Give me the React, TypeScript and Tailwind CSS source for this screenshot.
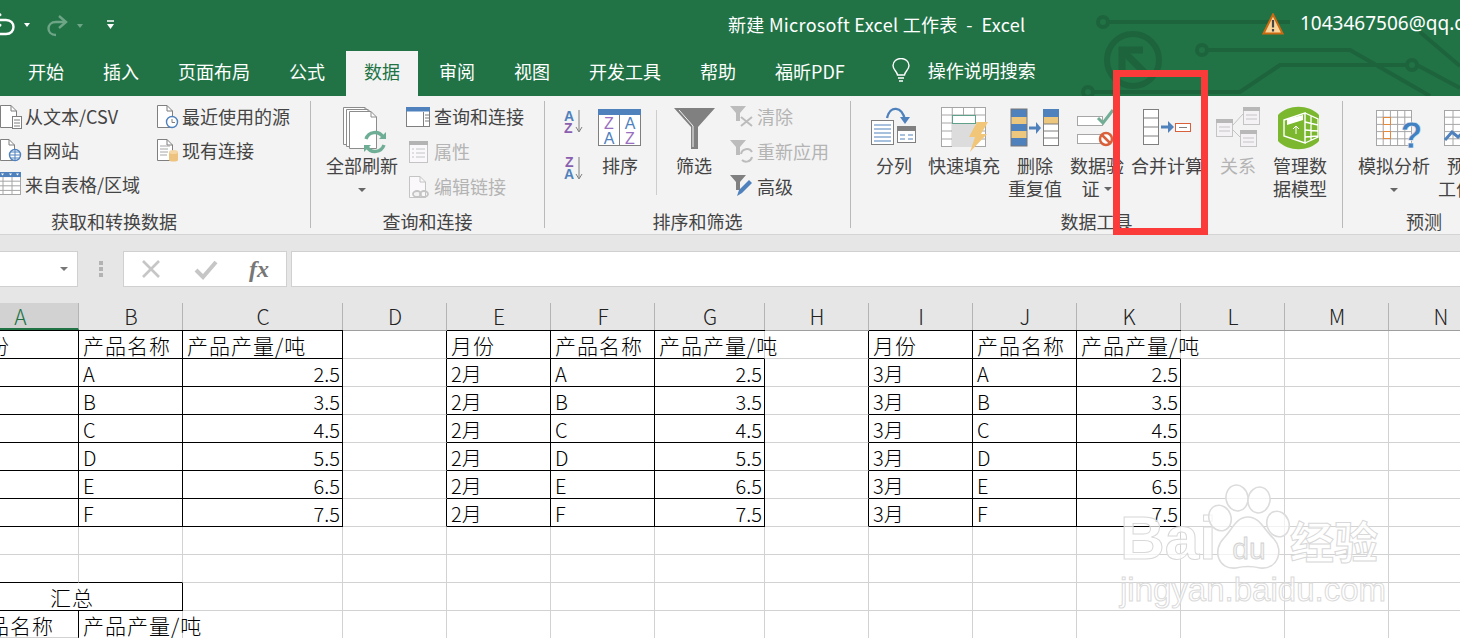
import React from "react";

const BLUE = "#4f81bd";
const GR = "#7f7f7f";
const DIS = "#c4c4c4";

function Page({ x, y, w, h, s = GR, fill = "#fff", fold = 6 }: { x: number; y: number; w: number; h: number; s?: string; fill?: string; fold?: number }) {
  return (
    <g fill={fill} stroke={s} strokeWidth="1">
      <path d={`M${x + 0.5} ${y + 0.5}H${x + w - fold}L${x + w - 0.5} ${y + fold}V${y + h - 0.5}H${x + 0.5}Z`} />
      <path d={`M${x + w - fold} ${y + 0.5}V${y + fold}H${x + w - 0.5}`} fill="none" />
    </g>
  );
}

function Grid({ x, y, w, h, cols, rows, s = GR, fill = "#fff" }: { x: number; y: number; w: number; h: number; cols: number; rows: number; s?: string; fill?: string }) {
  const v = Array.from({ length: cols - 1 }, (_, i) => x + ((i + 1) * w) / cols);
  const hz = Array.from({ length: rows - 1 }, (_, i) => y + ((i + 1) * h) / rows);
  return (
    <g stroke={s} strokeWidth="1">
      <rect x={x + 0.5} y={y + 0.5} width={w - 1} height={h - 1} fill={fill} />
      {v.map((p) => <path key={p} d={`M${p} ${y}V${y + h}`} />)}
      {hz.map((p) => <path key={p} d={`M${x} ${p}H${x + w}`} />)}
    </g>
  );
}

function Caret({ c = "#666" }: { c?: string }) {
  return (
    <svg width="10" height="6" viewBox="0 0 10 6" className="inline-block">
      <path d="M1 1H9L5 5Z" fill={c} />
    </svg>
  );
}

function Big({ left, w, lines, caret, disabled, children }: { left: number; w: number; lines: string[]; caret?: boolean; disabled?: boolean; children?: React.ReactNode }) {
  return (
    <div className="flex flex-col items-center shrink-0" style={{ width: w }}>
      <svg width={w} height="51" viewBox={`${left} 104 ${w} 51`} className="mt-[8px] overflow-visible shrink-0">{children}</svg>
      {lines.map((l, i) => (
        <div key={i} className={`h-[23px] pb-[2px] whitespace-nowrap flex items-center gap-[3px] ${disabled ? "text-[#b4b4b4]" : "text-[#444]"}`}>
          {l}
          {caret && lines.length > 1 && i === lines.length - 1 ? <Caret /> : null}
        </div>
      ))}
      {caret && lines.length === 1 ? <div className="h-[23px] flex items-center"><Caret /></div> : null}
    </div>
  );
}

function Small({ left, top, h, w, text, disabled, children }: { left: number; top: number; h: number; w: number; text: string; disabled?: boolean; children?: React.ReactNode }) {
  return (
    <div className="flex items-center" style={{ height: h }}>
      <svg width={w} height={h} viewBox={`${left} ${top} ${w} ${h}`} className="overflow-visible shrink-0">{children}</svg>
      <span className={`whitespace-nowrap pb-[2px] ${disabled ? "text-[#b4b4b4]" : "text-[#444]"}`}>{text}</span>
    </div>
  );
}

function Group({ w, label, className, children }: { w: number; label: string; className?: string; children: React.ReactNode }) {
  return (
    <div className={`flex flex-col shrink-0 ${className ?? ""}`} style={{ width: w }}>
      <div className="h-[116px] flex">{children}</div>
      <div className="h-[20px] leading-[18px] text-center text-[#444] whitespace-nowrap">{label}</div>
    </div>
  );
}

function Divider() {
  return <div className="w-px h-[127px] mt-[5px] bg-[#b9b9b9] shrink-0" />;
}

const TABS = ["开始", "插入", "页面布局", "公式", "数据", "审阅", "视图", "开发工具", "帮助", "福昕PDF"];
const HEADS = ["A", "B", "C", "D", "E", "F", "G", "H", "I", "J", "K", "L", "M", "N"];
const ITEMS = ["A", "B", "C", "D", "E", "F"];
const VALS = ["2.5", "3.5", "4.5", "5.5", "6.5", "7.5"];

function cellText(r: number, c: number): string {
  const table = (m: string, off: number) => {
    if (c === off) return r === 0 ? "月份" : m;
    if (c === off + 1) return r === 0 ? "产品名称" : ITEMS[r - 1];
    if (c === off + 2) return r === 0 ? "产品产量/吨" : VALS[r - 1];
    return "";
  };
  if (r > 6) return "";
  if (c <= 2) return table("1月", 0);
  if (c >= 4 && c <= 6) return table("2月", 4);
  if (c >= 8 && c <= 10) return table("3月", 8);
  return "";
}

function Cell({ r, c }: { r: number; c: number }) {
  const inTable = r <= 6 && [0, 1, 2, 4, 5, 6, 8, 9, 10].includes(c);
  let right = r <= 6 && [0, 1, 2, 3, 4, 5, 7, 8, 9].includes(c);
  if (r >= 1 && r <= 6 && (c === 6 || c === 10)) right = true;
  let bottom = inTable;
  if (r === 8 && c <= 1) bottom = true;
  if (r === 10 && c === 0) right = true;
  let text = cellText(r, c);
  if (r === 10 && c === 0) text = "产品名称";
  if (r === 10 && c === 1) text = "产品产量/吨";
  const isNum = r >= 1 && r <= 6 && (c === 2 || c === 6 || c === 10);
  const isCjk = /[\u4e00-\u9fff]/.test(text) && (text.length > 2 || text === "月份");
  return (
    <div
      className={`h-[28px] border-r border-b leading-[29px] text-black whitespace-nowrap font-light ${right ? "border-r-black" : "border-r-[#d2d2d2]"} ${bottom ? "border-b-black" : "border-b-[#d2d2d2]"} ${isNum ? "text-right pr-[2px]" : "pl-[4px]"} ${r === 0 && inTable ? "shadow-[0_-1px_0_#000]" : ""} ${r === 10 && c === 0 ? "border-b-[#217346] border-b-2" : ""} ${isCjk ? "text-[21px] tracking-[1px]" : "text-[20px]"}`}
    >
      {text}
    </div>
  );
}

export default function App() {
  const rows = Array.from({ length: 11 }, (_, i) => i);
  const gridCols = "grid grid-cols-[117px_104px_160px_104px_104px_104px_110px_104px_104px_104px_104px_104px_104px_104px] w-[1537px] -ml-[38px]";
  return (
    <div className="relative w-[1460px] h-[638px] overflow-hidden bg-white text-[18px] font-['Noto_Sans_CJK_SC',sans-serif]">
      {/* Title + tabs */}
      <div className="relative h-[96px] bg-[#217346] text-white">
        <svg className="absolute left-0 top-0" width="1460" height="96" viewBox="0 0 1460 96" fill="none" stroke="#1d643d" strokeWidth="4">
          <circle cx="1103" cy="22" r="5" />
          <path d="M1108 22H1290" />
          <circle cx="1133" cy="60" r="26" strokeWidth="6" />
          <path d="M1125 53L1147 75" strokeWidth="7" />
          <path d="M1143 50H1122V71" strokeWidth="7" />
          <circle cx="1202" cy="50" r="5" />
          <path d="M1207 50H1350L1430 96" />
          <circle cx="1412" cy="65" r="5" />
          <path d="M1093 92H1240L1280 65H1407M1417 65L1460 88M1420 32L1460 66" />
          <circle cx="1088" cy="92" r="5" />
        </svg>
        <div className="relative h-[50px] flex items-center pb-[3px]">
          <div className="w-[728px] h-[47px] shrink-0 flex items-center">
            <svg width="130" height="48" viewBox="0 0 130 48" fill="none">
              <path d="M-3 20H6C16 20 16 34 6 34H-1" stroke="#fff" strokeWidth="2.4" />
              <path d="M1 14L-6 20L1 26" stroke="#fff" strokeWidth="2.4" />
              <path d="M24 23H30L27 27Z" fill="#fff" />
              <path d="M65 22H56C46 22 46 35 56 35" stroke="#6ea586" strokeWidth="2.4" />
              <path d="M59 16L66 22L59 28" stroke="#6ea586" strokeWidth="2.4" />
              <path d="M77 24H83L80 28Z" fill="#6ea586" />
              <path d="M107 21H114" stroke="#fff" strokeWidth="1.5" />
              <path d="M107 24H114L110.5 29Z" fill="#fff" />
            </svg>
          </div>
          <div className="w-[534px] shrink-0 whitespace-nowrap leading-[24px] tracking-[0.3px]">新建 Microsoft Excel 工作表&nbsp;&nbsp;-&nbsp;&nbsp;Excel</div>
          <div className="w-[38px] shrink-0">
            <svg width="22" height="22" viewBox="0 0 22 22">
              <path d="M11 1.5L20.5 20.5H1.5Z" fill="#f9d59a" stroke="#cc6a12" strokeWidth="2" />
              <path d="M11 7V14.5" stroke="#444" strokeWidth="2.2" />
              <path d="M11 16V18.5" stroke="#444" strokeWidth="2.2" />
            </svg>
          </div>
          <div className="whitespace-nowrap text-[19px] font-['Noto_Sans',sans-serif]">1043467506@qq.com</div>
        </div>
        <div className="relative h-[46px] flex pl-[10px] gap-[3px]">
          {TABS.map((t) => (
            <div key={t} className={`mt-[1px] px-[18px] leading-[41px] whitespace-nowrap ${t === "数据" ? "bg-[#f3f3f3] text-[#217346]" : ""}`}>{t}</div>
          ))}
          <div className="ml-[25px] flex items-center gap-[17px] mb-[6px]">
            <svg width="20" height="24" viewBox="0 0 20 24" fill="none" stroke="#fff" strokeWidth="1.4">
              <path d="M6.5 17C6 13 2 12 2 7.5A8 7 0 0 1 18 7.5C18 12 14 13 13.5 17Z" />
              <path d="M7 20H13M8 23H12" />
            </svg>
            <span className="whitespace-nowrap">操作说明搜索</span>
          </div>
        </div>
      </div>

      {/* Ribbon */}
      <div className="h-[139px] bg-[#f3f3f3] border-b border-[#d4d4d4] flex">
        <Group w={392} label="获取和转换数据" className="-ml-[82px]">
          <div className="ml-[79px] w-[160px] pt-[4px] shrink-0">
            <Small left={-3} top={100} h={34} w={28} text="从文本/CSV">
              <Page x={0} y={105} w={17} h={23} />
              <rect x="12.5" y="116.5" width="9" height="12" fill="#fff" stroke={GR} />
              <path d="M14 120H20M14 123H20M14 126H20" stroke={GR} />
            </Small>
            <Small left={-3} top={134} h={34} w={28} text="自网站">
              <Page x={0} y={139} w={15} h={22} />
              <circle cx="15" cy="155" r="5.5" fill="#fff" stroke={BLUE} strokeWidth="1.4" />
              <path d="M9.5 155H20.5M15 149.5V160.5M10.5 152H19.5M10.5 158H19.5" stroke={BLUE} strokeWidth="1" />
            </Small>
            <Small left={-3} top={168} h={34} w={28} text="来自表格/区域">
              <Grid x={-6} y={172} w={27} h={23} cols={3} rows={5} s="#a6a6a6" />
              <rect x="-6" y="172" width="27" height="5" fill={BLUE} />
              <path d="M1 173.5H4L2.5 175.5ZM9 173.5H12L10.5 175.5ZM16 173.5H19L17.5 175.5Z" fill="#fff" />
            </Small>
          </div>
          <div className="pt-[4px] shrink-0">
            <Small left={157} top={100} h={34} w={25} text="最近使用的源">
              <Page x={157} y={105} w={16} h={23} />
              <circle cx="172" cy="122" r="5.5" fill="#fff" stroke={BLUE} strokeWidth="1.4" />
              <path d="M172 119V122.5H175" stroke={GR} fill="none" />
            </Small>
            <Small left={157} top={134} h={34} w={25} text="现有连接">
              <Page x={157} y={139} w={16} h={22} />
              <path d="M160 146H170M160 149H168M160 152H168M160 155H167" stroke="#a6a6a6" />
              <path d="M169 152V160C169 162 178 162 178 160V152Z" fill="#eec37f" />
              <ellipse cx="173.5" cy="152" rx="4.5" ry="2" fill="#f5d6a5" />
            </Small>
          </div>
        </Group>
        <Divider />
        <Group w={233} label="查询和连接">
          <div className="ml-[9px]">
            <Big left={320} w={84} lines={["全部刷新"]} caret>
              <Page x={343} y={107} w={28} h={38} s="#8c8c8c" />
              <Page x={346} y={109} w={28} h={38} s="#8c8c8c" />
              <Page x={349} y={111} w={28} h={38} s="#8c8c8c" />
              <g fill="none" stroke="#6fae96" strokeWidth="3.4">
                <path d="M366 139A9.5 9.5 0 0 1 383 137" />
                <path d="M384 145A9.5 9.5 0 0 1 367 147" />
              </g>
              <path d="M379 139H386V132Z" fill="#6fae96" />
              <path d="M371 145H364V152Z" fill="#6fae96" />
            </Big>
          </div>
          <div className="ml-[2px] pt-[4px] shrink-0">
            <Small left={406} top={100} h={35} w={28} text="查询和连接">
              <rect x="406.5" y="107.5" width="23" height="19" fill="#fff" stroke={GR} />
              <rect x="406" y="107" width="24" height="4.5" fill={BLUE} />
              <path d="M423.5 112V127M425 115H429M425 118H429M425 121H429" stroke={GR} />
            </Small>
            <Small left={406} top={135} h={35} w={28} text="属性" disabled>
              <rect x="409.5" y="141.5" width="18" height="21" fill="#faf8fb" stroke={DIS} />
              <rect x="409" y="141" width="19" height="4" fill="#b3b3b3" />
              <path d="M412 149H414M416 149H425M412 153H414M416 153H425M412 157H414M416 157H425" stroke={DIS} />
            </Small>
            <Small left={406} top={170} h={35} w={28} text="编辑链接" disabled>
              <Page x={409} y={176} w={17} h={22} s={DIS} fill="#faf8fb" />
              <g fill="none" stroke={DIS} strokeWidth="1.8">
                <ellipse cx="417" cy="194" rx="4" ry="3" fill="#f3f3f3" />
                <ellipse cx="424" cy="194" rx="4" ry="3" />
              </g>
            </Small>
          </div>
        </Group>
        <Divider />
        <Group w={305} label="排序和筛选">
          <div className="ml-[19px] w-[20px] relative shrink-0">
            <svg width="20" height="100" viewBox="564 104 20 100">
              <text x="564" y="129" fontSize="14" fontWeight="700" fill={BLUE} fontFamily="'Liberation Sans',sans-serif">A</text>
              <text x="564" y="141" fontSize="14" fontWeight="700" fill="#8a5fb0" fontFamily="'Liberation Sans',sans-serif">Z</text>
              <path d="M579 118V139M576 135L579 140L582 135" stroke={GR} fill="none" />
              <text x="565" y="175" fontSize="14" fontWeight="700" fill="#8a5fb0" fontFamily="'Liberation Sans',sans-serif">Z</text>
              <text x="564" y="187" fontSize="14" fontWeight="700" fill={BLUE} fontFamily="'Liberation Sans',sans-serif">A</text>
              <path d="M579 165V186M576 182L579 187L582 182" stroke={GR} fill="none" />
            </svg>
          </div>
          <Big left={584} w={72} lines={["排序"]}>
            <rect x="598.5" y="109.5" width="42" height="36" fill="#fff" stroke={GR} />
            <rect x="598" y="109" width="43" height="6" fill={BLUE} />
            <path d="M619.5 115V146" stroke={GR} />
            <g fontSize="16" fontFamily="'Liberation Sans',sans-serif" textAnchor="middle">
              <text x="609" y="129" fill="#9a6fc0">Z</text>
              <text x="609" y="144" fill={BLUE}>A</text>
              <text x="630" y="129" fill={BLUE}>A</text>
              <text x="630" y="144" fill="#9a6fc0">Z</text>
            </g>
          </Big>
          <div className="w-px h-[85px] mt-[14px] bg-[#cdcdcd] shrink-0" />
          <div className="ml-[2px]">
            <Big left={660} w={70} lines={["筛选"]}>
              <path d="M675 108H716L699 127V149H692V127Z" fill="#808080" />
              <path d="M680 110L694 126V147" stroke="#f3f3f3" fill="none" strokeWidth="1" />
            </Big>
          </div>
          <div className="ml-[1px] pt-[4px] shrink-0">
            <Small left={731} top={101} h={35} w={27} text="清除" disabled>
              <path d="M731 107H747L741 114V122H737V114Z" fill="#bcbcbc" />
              <path d="M742 118L753 127M753 118L742 127" stroke="#bcbcbc" strokeWidth="2" />
            </Small>
            <Small left={731} top={136} h={35} w={27} text="重新应用" disabled>
              <path d="M731 141H747L741 148V156H737V148Z" fill="#bcbcbc" />
              <path d="M742 155A6 6 0 0 1 753 153M753 158A6 6 0 0 1 743 161" stroke="#bcbcbc" strokeWidth="2" fill="none" />
            </Small>
            <Small left={731} top={171} h={35} w={27} text="高级">
              <path d="M731 176H747L741 183V191H737V183Z" fill="#808080" />
              <path d="M738 197L740 191L750 181L753 184L743 194Z" fill={BLUE} />
            </Small>
          </div>
        </Group>
        <Divider />
        <Group w={491} label="数据工具">
          <div className="ml-[9px] shrink-0">
            <Big left={860} w={68} lines={["分列"]}>
              <rect x="871.5" y="120.5" width="22" height="24" fill="#fff" stroke={GR} />
              <path d="M874 125H891M874 129H891M874 133H891M874 137H891M874 141H891" stroke={BLUE} />
              <rect x="897.5" y="126.5" width="18" height="16" fill="#fff" stroke={GR} />
              <rect x="897" y="126" width="19" height="5" fill="#808080" />
              <path d="M900 135H905M908 135H913M900 139H905M908 139H913" stroke={BLUE} />
              <path d="M887 118C890 105 902 106 905 120" stroke={BLUE} strokeWidth="2.4" fill="none" />
              <path d="M900 117H910L905 124Z" fill={BLUE} />
            </Big>
          </div>
          <Big left={928} w={72} lines={["快速填充"]}>
            <Grid x={941} y={107} w={45} h={40} cols={4} rows={5} s="#a6a6a6" />
            <rect x="952" y="124" width="23" height="23" fill="#dcdcdc" />
            <rect x="952.5" y="115.5" width="23" height="8" fill="#fff" stroke="#5fa28a" />
            <path d="M977 122H988L981 134H987L970 152L975 137H969Z" fill="#f2c679" />
          </Big>
          <Big left={1000} w={70} lines={["删除", "重复值"]}>
            <rect x="1011" y="109" width="16" height="37" fill={BLUE} stroke="#777" />
            <rect x="1011.5" y="117" width="15" height="7" fill="#eec77f" />
            <rect x="1011.5" y="131" width="15" height="7" fill="#eec77f" />
            <rect x="1043.5" y="109.5" width="15" height="36" fill="#fff" stroke={GR} />
            <rect x="1043" y="109" width="16" height="8" fill={BLUE} />
            <rect x="1044" y="117" width="14" height="7" fill="#eec77f" />
            <path d="M1044 131H1058M1044 138H1058M1044 124H1058" stroke={GR} />
            <path d="M1029 128H1037" stroke={BLUE} strokeWidth="3" />
            <path d="M1036 122L1041 128L1036 134Z" fill={BLUE} />
          </Big>
          <Big left={1070} w={54} lines={["数据验", "证"]} caret>
            <rect x="1077.5" y="116.5" width="25" height="9" fill="#fff" stroke="#a6a6a6" />
            <rect x="1077.5" y="134.5" width="25" height="9" fill="#fff" stroke="#a6a6a6" />
            <path d="M1098 118L1103 123L1113 110" stroke="#72ad96" strokeWidth="3" fill="none" />
            <circle cx="1106" cy="139" r="6" fill="#fff" stroke="#d8613c" strokeWidth="2.5" />
            <path d="M1102 135L1110 143" stroke="#d8613c" strokeWidth="2.5" />
          </Big>
          <Big left={1124} w={86} lines={["合并计算"]}>
            <Grid x={1143} y={109} w={16} h={36} cols={1} rows={4} />
            <path d="M1161 127H1170" stroke={BLUE} strokeWidth="3" />
            <path d="M1168 121L1174 127L1168 133Z" fill={BLUE} />
            <rect x="1175.5" y="123.5" width="15" height="8" fill="#fff" stroke="#d8613c" />
            <path d="M1179 127.5H1187" stroke={GR} />
          </Big>
          <Big left={1210} w={56} lines={["关系"]} disabled>
            <rect x="1216.5" y="119.5" width="16" height="17" fill="#f5f2f6" stroke={DIS} />
            <rect x="1216" y="119" width="17" height="4" fill="#b8b8b8" />
            <rect x="1243.5" y="107.5" width="16" height="17" fill="#f5f2f6" stroke={DIS} />
            <rect x="1243" y="107" width="17" height="4" fill="#b8b8b8" />
            <rect x="1240.5" y="130.5" width="16" height="16" fill="#f5f2f6" stroke={DIS} />
            <rect x="1240" y="130" width="17" height="4" fill="#b8b8b8" />
            <path d="M1233 125L1243 114M1233 130L1240 137M1219 127H1230M1219 131H1230M1246 115H1257M1246 119H1257M1243 138H1254M1243 142H1254" stroke={DIS} />
          </Big>
          <Big left={1266} w={68} lines={["管理数", "据模型"]}>
            <path d="M1278 115C1288 104 1309 104 1319 115V141C1309 152 1288 152 1278 141Z" fill="#7cb82f" />
            <path d="M1284 120L1305 113V143L1284 136Z" fill="none" stroke="#fff" strokeWidth="1.4" />
            <path d="M1305 113L1318 119V137L1305 143M1305 122L1318 125M1305 130L1318 131M1305 137L1318 136M1311 116V140" fill="none" stroke="#fff" strokeWidth="1.3" />
            <path d="M1287 119V125L1303 120V115Z" fill="#fff" />
            <path d="M1296 127V134M1293 129L1296 126L1299 129" stroke="#fff" fill="none" />
          </Big>
        </Group>
        <Divider />
        <Group w={162} label="预测">
          <div className="ml-[7px] shrink-0">
            <Big left={1350} w={88} lines={["模拟分析"]} caret>
              <Grid x={1376} y={110} w={36} h={36} cols={5} rows={5} s="#a6a6a6" />
              <rect x="1383.5" y="117.5" width="7" height="7" fill="#fff" stroke="#e5883a" />
              <rect x="1383.5" y="131.5" width="7" height="7" fill="#fff" stroke="#e5883a" />
              <text x="1411.5" y="148" textAnchor="middle" fontSize="36" fontWeight="700" fill="#4181c2" stroke="#f3f3f3" strokeWidth="0.5" fontFamily="'Liberation Sans',sans-serif">?</text>
            </Big>
          </div>
          <Big left={1438} w={54} lines={["预测", "工作表"]}>
            <Grid x={1444} y={110} w={36} h={36} cols={4} rows={5} s="#a6a6a6" />
            <path d="M1445 140L1452 132L1458 137L1468 128" stroke={BLUE} strokeWidth="3" fill="none" />
          </Big>
        </Group>
      </div>

      {/* Formula bar */}
      <div className="h-[68px] bg-[#e6e6e6] flex pt-[16px] items-start">
        <div className="-ml-[2px] w-[80px] h-[36px] bg-white border border-[#d0d0d0] flex items-center justify-end pr-[8px] shrink-0">
          <svg width="10" height="6" viewBox="0 0 10 6"><path d="M1 1H9L5 5Z" fill="#777" /></svg>
        </div>
        <div className="w-[45px] h-[36px] flex flex-col items-center justify-center gap-[2px] shrink-0">
          <div className="w-[4px] h-[4px] bg-[#b3b3b3]" />
          <div className="w-[4px] h-[4px] bg-[#b3b3b3]" />
          <div className="w-[4px] h-[4px] bg-[#b3b3b3]" />
        </div>
        <div className="w-[164px] h-[36px] bg-white border border-[#d0d0d0] flex items-center shrink-0">
          <svg width="54" height="34" viewBox="0 0 54 34" className="shrink-0">
            <path d="M19 9L35 25M35 9L19 25" stroke="#c6c6c6" strokeWidth="2.6" />
          </svg>
          <svg width="54" height="34" viewBox="0 0 54 34" className="shrink-0">
            <path d="M18 18L25 25L38 10" stroke="#c6c6c6" strokeWidth="4" fill="none" />
          </svg>
          <span className="w-[54px] text-center text-[#777] text-[24px] font-bold italic leading-[30px] font-['Liberation_Serif',serif]">fx</span>
        </div>
        <div className="ml-[4px] w-[1200px] shrink-0 h-[36px] bg-white border border-[#d0d0d0]" />
      </div>

      {/* Column headers */}
      <div className="h-[28px] bg-[#e6e6e6] border-b border-[#9e9e9e] overflow-hidden">
        <div className={gridCols}>
          {HEADS.map((h, i) => (
            <div
              key={h}
              className={`h-[27px] border-r border-[#b4b4b4] text-center leading-[27px] text-[21px] font-light pl-[1px] ${i === 0 ? "bg-[#d2d2d2] text-[#217346] border-b-2 border-b-[#217346]" : "text-[#222]"}`}
            >
              {h}
            </div>
          ))}
        </div>
      </div>

      {/* Sheet */}
      <div className={gridCols}>
        {rows.map((r) =>
          r === 9 ? (
            <React.Fragment key={r}>
              <div className="col-span-2 h-[28px] border-r border-b border-black text-center leading-[29px] text-[21px] tracking-[1px] font-light text-black">汇总</div>
              {HEADS.slice(2).map((h) => <Cell key={h} r={r} c={HEADS.indexOf(h)} />)}
            </React.Fragment>
          ) : (
            <React.Fragment key={r}>
              {HEADS.map((h, c) => <Cell key={h} r={r} c={c} />)}
            </React.Fragment>
          )
        )}
      </div>

      {/* Red annotation */}
      <div className="absolute left-[1113px] top-[70px] w-[95px] h-[165px] border-[7px] border-[#fb3a3a]" />

      {/* Watermark */}
      <div className="absolute left-[1118px] top-[484px] w-[270px] h-[125px] pointer-events-none font-['Liberation_Sans',sans-serif]">
        <span className="absolute left-[2px] top-[22px] text-[62px] leading-[64px] font-bold text-white/70 [-webkit-text-stroke:1px_#d8d8d8]">Bai</span>
        <svg className="absolute left-[88px] top-0" width="86" height="92" viewBox="0 0 86 92" fill="rgba(255,255,255,0.7)" stroke="#dcdcdc" strokeWidth="1.6">
          <ellipse cx="31" cy="14" rx="11" ry="13" transform="rotate(-10 31 14)" />
          <ellipse cx="53" cy="16" rx="11" ry="13" transform="rotate(10 53 16)" />
          <ellipse cx="14" cy="34" rx="11" ry="13" transform="rotate(-20 14 34)" />
          <ellipse cx="72" cy="40" rx="11" ry="13" transform="rotate(-20 72 40)" />
          <path d="M42 33C54 33 58 46 68 55C78 66 72 86 54 84C46 82 38 82 30 84C12 86 6 66 18 54C26 46 30 33 42 33Z" />
          <text x="43" y="75" textAnchor="middle" fontSize="30" fill="#f2f2f2" stroke="#d0d0d0" strokeWidth="0.8" fontFamily="'Liberation Sans',sans-serif">du</text>
        </svg>
        <span className="absolute left-[172px] top-[30px] text-[44px] leading-[52px] font-bold text-white/70 [-webkit-text-stroke:1px_#d8d8d8] font-['Noto_Sans_CJK_SC',sans-serif]">经验</span>
        <span className="absolute left-[2px] top-[88px] text-[33px] leading-[36px] whitespace-nowrap text-white/60 [-webkit-text-stroke:1px_#dadada]">jingyan.baidu.com</span>
      </div>
    </div>
  );
}
